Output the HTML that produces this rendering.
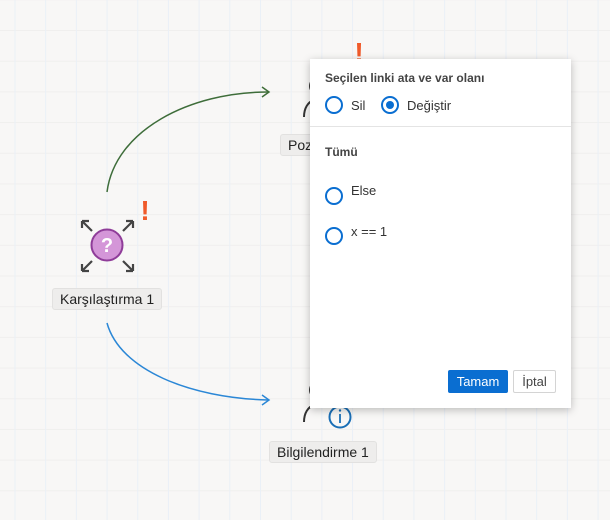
<!DOCTYPE html>
<html><head><meta charset="utf-8"><style>
*{margin:0;padding:0;box-sizing:border-box}
body{width:610px;height:520px;overflow:hidden;position:relative;font-family:"Liberation Sans","DejaVu Sans",sans-serif;
background-color:#f8f7f6;
background-image:linear-gradient(to right,#eaf0f7 1px,transparent 1px),linear-gradient(to bottom,#f0efee 1px,transparent 1px);
background-size:30.7px 30.7px;background-position:14.5px 0,0 30px;}
.lbl{position:absolute;height:22px;background:#eeedec;border:1px solid #e2e1e0;border-radius:3px;font-size:14px;color:#222;line-height:20px;padding:0 7px}
.panel{position:absolute;left:310px;top:59px;width:261px;height:349px;background:#fff;box-shadow:0 2px 8px rgba(0,0,0,.25);color:#333}
.r{position:absolute;width:18px;height:18px;border:2px solid #0a6ed1;border-radius:50%}
.r.on::after{content:"";position:absolute;left:3px;top:3px;width:8px;height:8px;border-radius:50%;background:#0a6ed1}
.t{position:absolute;font-size:13px;color:#333}
</style></head><body>
<svg width="610" height="520" style="position:absolute;left:0;top:0">
<path d="M107 192 C115 130 190 92 268 92" fill="none" stroke="#3e6d3a" stroke-width="1.5"/>
<path d="M262 87 L269 92 L262 97" fill="none" stroke="#3e6d3a" stroke-width="1.5"/>
<path d="M107 323 C120 370 190 398 268 400" fill="none" stroke="#2b87d6" stroke-width="1.5"/>
<path d="M262 395 L269 400 L262 405" fill="none" stroke="#2b87d6" stroke-width="1.5"/>
<g stroke="#444" stroke-width="2.2" fill="none">
<path d="M82 221 L92 231 M82 221 L82 228 M82 221 L89 221"/>
<path d="M133 221 L123 231 M133 221 L133 228 M133 221 L126 221"/>
<path d="M82 271 L92 261 M82 271 L82 264 M82 271 L89 271"/>
<path d="M133 271 L123 261 M133 271 L133 264 M133 271 L126 271"/>
</g>
<circle cx="107" cy="245" r="15.5" fill="#d496d8" stroke="#8f3c99" stroke-width="2"/>
<text x="107" y="252" font-size="20" font-weight="bold" fill="#fff" text-anchor="middle" font-family="Liberation Sans">?</text>
<text x="145" y="220" font-size="28" font-weight="bold" fill="#f05a2a" text-anchor="middle" font-family="Liberation Sans">!</text>
<text x="359" y="62" font-size="28" font-weight="bold" fill="#f05a2a" text-anchor="middle" font-family="Liberation Sans">!</text>
<circle cx="318" cy="86" r="8" fill="none" stroke="#333" stroke-width="2"/>
<path d="M304 117 C304 108 308 102 314 100" fill="none" stroke="#333" stroke-width="2"/>
<circle cx="318" cy="390" r="8" fill="none" stroke="#333" stroke-width="2"/>
<path d="M304 422 C304 413 308 407 314 405" fill="none" stroke="#333" stroke-width="2"/>
<circle cx="340" cy="417" r="10.5" fill="none" stroke="#1a6fb6" stroke-width="2"/>
<path d="M340 414 L340 423" stroke="#1a6fb6" stroke-width="1.8"/>
<circle cx="340" cy="410.5" r="1.2" fill="#1a6fb6"/>
</svg>
<div class="lbl" style="left:52px;top:288px">Karşılaştırma 1</div>
<div class="lbl" style="left:280px;top:134px;width:40px">Poz</div>
<div class="lbl" style="left:269px;top:441px">Bilgilendirme 1</div>
<div class="panel">
<div class="t" style="left:15px;top:12px;font-size:12px;font-weight:bold;color:#444">Seçilen linki ata ve var olanı</div>
<div class="r" style="left:15px;top:37px"></div><div class="t" style="left:41px;top:39px">Sil</div>
<div class="r on" style="left:71px;top:37px"></div><div class="t" style="left:97px;top:39px">Değiştir</div>
<div style="position:absolute;left:0;top:67px;width:261px;height:1px;background:#e4e4e4"></div>
<div class="t" style="left:15px;top:86px;font-size:12px;font-weight:bold;color:#444">Tümü</div>
<div class="r" style="left:15px;top:128px"></div><div class="t" style="left:41px;top:124px">Else</div>
<div class="r" style="left:15px;top:168px"></div><div class="t" style="left:41px;top:165px">x == 1</div>
<div style="position:absolute;left:138px;top:311px;width:60px;height:23px;background:#0a6ed1;border-radius:2px;color:#fff;font-size:13px;text-align:center;line-height:23px">Tamam</div>
<div style="position:absolute;left:203px;top:311px;width:43px;height:23px;border:1px solid #d4d4d4;border-radius:2px;color:#444;font-size:13px;text-align:center;line-height:21px">İptal</div>
</div>
</body></html>
